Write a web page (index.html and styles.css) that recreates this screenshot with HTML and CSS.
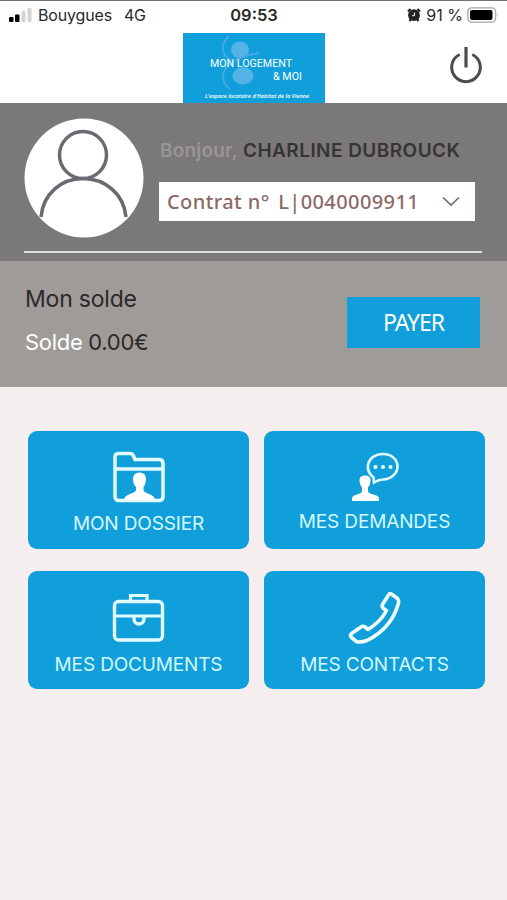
FILE: index.html
```html
<!DOCTYPE html>
<html lang="fr">
<head>
    <meta charset="UTF-8">
    <meta name="viewport" content="width=device-width, initial-scale=1.0">
    <title>Mon Logement &amp; Moi</title>
    <link rel="stylesheet" href="styles.css">
</head>
<body>
    <div class="status-bar">
        <div class="status-left">
            <svg class="signal" width="24" height="16" viewBox="0 0 24 16">
                <rect x="0" y="10" width="4.500" height="5" rx="1" fill="#000"/>
                <rect x="6" y="7.500" width="4.500" height="7.500" rx="1" fill="#000"/>
                <rect x="12.500" y="4" width="4" height="11" rx="1" fill="#d4d4d4"/>
                <rect x="18.500" y="1" width="4" height="14" rx="1" fill="#d4d4d4"/>
            </svg>
            <span class="carrier">Bouygues</span>
            <span class="network">4G</span>
        </div>
        <span class="time">09:53</span>
        <div class="status-right">
            <svg width="14" height="14" viewBox="0 0 14 14">
                <path d="M1 3.500L3.500 1M13 3.500L10.500 1M2.500 13l1.500-2M11.500 13l-1.500-2" stroke="#222" stroke-width="2.200"/>
                <circle cx="7" cy="7.200" r="5.900" fill="#222"/>
                <path d="M7.500 4.500v3.200H5" fill="none" stroke="#fff" stroke-width="1"/>
            </svg>
            <span class="percent">91 %</span>
            <svg class="battery" width="32" height="16" viewBox="0 0 32 16">
                <rect x="0.800" y="0.800" width="27.800" height="14.400" rx="4" fill="#fff" stroke="#a5a5a5" stroke-width="1.300"/>
                <rect x="3" y="3" width="22.500" height="10" rx="2" fill="#000"/>
                <path d="M30 6v4q1.600-2 0-4z" fill="#a5a5a5"/>
            </svg>
        </div>
    </div>

    <div class="header">
        <svg class="logo" width="142" height="70" viewBox="0 0 142 70">
            <rect width="142" height="70" fill="#109fdb"/>
            <ellipse cx="57" cy="17" rx="9" ry="8.500" fill="#55b2e6"/>
            <ellipse cx="60" cy="43" rx="10.500" ry="8.500" fill="#55b2e6"/>
            <path d="M46 3q-7 6-6 14 2 9 11 12M51 29q-10 4-11 14 0 9 7 13M52 28q10-6 24-8" fill="none" stroke="#45ace2" stroke-width="1.800"/>
            <text class="logo-text" x="27" y="34" textLength="82" lengthAdjust="spacingAndGlyphs">MON LOGEMENT</text>
            <text class="logo-text" x="90" y="46.500" textLength="29" lengthAdjust="spacingAndGlyphs">&amp; MOI</text>
            <text class="logo-small" x="22" y="65" textLength="104" lengthAdjust="spacingAndGlyphs">L'espace locataire d'Habitat de la Vienne</text>
        </svg>
        <svg class="power" width="34" height="40" viewBox="0 0 34 40">
            <path d="M10.700 8.500A14.300 14.300 0 1 0 23.300 8.500" fill="none" stroke="#4c4c4c" stroke-width="3"/>
            <path d="M17 1v20.500" stroke="#4c4c4c" stroke-width="3.200"/>
        </svg>
    </div>

    <div class="profile">
        <div class="profile-row">
            <svg class="avatar" width="120" height="120" viewBox="0 0 120 120">
                <circle cx="60" cy="60" r="59.500" fill="#fff"/>
                <circle cx="59" cy="37" r="23.500" fill="none" stroke="#6a6b72" stroke-width="3.500"/>
                <path d="M17 99C19 76 37 60.500 59 60.500S100 76 102 99" fill="none" stroke="#6a6b72" stroke-width="3.500"/>
            </svg>
            <div class="profile-info">
                <div class="hello"><span class="bonjour">Bonjour,</span><span class="name">CHARLINE DUBROUCK</span></div>
                <div class="contract">
                    <span class="contract-label">Contrat n<span class="degree">°</span> L|0040009911</span>
                    <svg width="18" height="11" viewBox="0 0 18 11">
                        <path d="M1 1.500l8 7.500 8-7.500" fill="none" stroke="#77696a" stroke-width="1.700"/>
                    </svg>
                </div>
            </div>
        </div>
    </div>

    <div class="balance">
        <div>
            <div class="balance-title">Mon solde</div>
            <div class="balance-value"><span>Solde</span> 0.00€</div>
        </div>
        <a href="#" class="pay">PAYER</a>
    </div>

    <div class="menu">
        <a href="#" class="card">
            <svg width="54" height="54" viewBox="0 0 54 54">
                <path d="M6 3.500H18Q20.500 3.500 21.500 6L23 9.500H47Q51 9.500 51 13.500V46.500Q51 50.500 47 50.500H7Q3 50.500 3 46.500V7Q3 3.500 6 3.500ZM3 19H51" fill="none" stroke="#e2fbff" stroke-width="3.600"/>
                <path d="M12 50Q12 46 18 44Q24 42 24 40V37Q21 34 21 29Q21 22.500 27.500 22.500Q34 22.500 34 29Q34 34 31.500 37V40Q31.500 42 37 44Q43 46 43 50Z" fill="#fff"/>
            </svg>
            <span>MON DOSSIER</span>
        </a>
        <a href="#" class="card card-demandes">
            <svg width="54" height="54" viewBox="0 0 54 54">
                <path d="M25.500 27.500C20 23 19.500 18 20 15C21.500 7.500 28 4 35 4C43.500 4 49.500 9.500 49.500 16.500S43 29 35 29.500C32 29.500 30 30 26 32.500Z" fill="none" stroke="#e2fbff" stroke-width="2.600"/>
                <circle cx="27.500" cy="17" r="2.100" fill="#e2fbff"/>
                <circle cx="35" cy="17" r="2.100" fill="#e2fbff"/>
                <circle cx="42.500" cy="17" r="2.100" fill="#e2fbff"/>
                <path d="M4 51V48.500Q4 46 9 44.500Q14 43 14 41V37.500Q11.500 35 11.500 30Q11.500 25.500 17 25.500Q22.500 25.500 22.500 30Q22.500 35 20 37.500V41Q20 43 25.500 44.500Q31 46 31 48.500V51Z" fill="#fff"/>
            </svg>
            <span>MES DEMANDES</span>
        </a>
        <a href="#" class="card card-low">
            <svg width="54" height="54" viewBox="0 0 54 54">
                <rect x="2.500" y="11.500" width="48" height="38.500" rx="4" fill="none" stroke="#e2fbff" stroke-width="3.400"/>
                <path d="M18.500 11V5.500H35V11M3 26H50.500" fill="none" stroke="#e2fbff" stroke-width="3.200"/>
                <path d="M22 27V29A5 5 0 0 0 32 29V27" fill="none" stroke="#e2fbff" stroke-width="3.400"/>
            </svg>
            <span>MES DOCUMENTS</span>
        </a>
        <a href="#" class="card card-low">
            <svg width="54" height="54" viewBox="0 0 54 54">
                <path d="M43.500 4L49.500 8.500Q51 10 50.500 13C46 30 35 42.500 19 50.500Q12 53 8.500 51.500L3.500 47.500Q1.500 45.500 3.500 43.500L13 37Q15 35.500 17 37L20 39.500C28 34.500 34.500 28.500 38.500 20.500L35.500 18.500Q33.500 17 34.500 14.500L40.500 5Q41.500 3 43.500 4Z" fill="none" stroke="#f0fdff" stroke-width="3.600" stroke-linejoin="round"/>
            </svg>
            <span>MES CONTACTS</span>
        </a>
    </div>
</body>
</html>
```
FILE: styles.css
```css
* {
    box-sizing: border-box;
}
body {
    font-family: Inter, "Liberation Sans", sans-serif;
    background: #f4efee;
    margin: 0;
    height: 900px;
    color: #2b292a;
}
svg {
    display: block;
    flex: none;
}
a {
    text-decoration: none;
}
.status-bar {
    display: grid;
    grid-template-columns: 1fr auto 1fr;
    align-items: center;
    height: 28px;
    padding: 0 8px 0 9px;
    border-top: 1px solid #747273;
    background: #fff;
    font-size: 16px;
    white-space: nowrap;
}
.status-left,
.status-right {
    display: flex;
    align-items: center;
}
.status-right {
    justify-content: flex-end;
}
.carrier {
    margin-left: 5px;
    letter-spacing: -0.15px;
}
.network {
    margin-left: 12px;
    letter-spacing: -0.3px;
}
.time {
    font-size: 16.5px;
    font-weight: 600;
}
.percent {
    margin: 0 4px 0 5px;
}
.header {
    display: flex;
    align-items: flex-start;
    justify-content: space-between;
    height: 75px;
    padding: 5px 24px 0 183px;
    background: #fff;
}
.logo-text {
    font: 400 10.5px Roboto, sans-serif;
    fill: #fff;
}
.logo-small {
    font: italic 600 5.5px "Open Sans", sans-serif;
    fill: #fff;
}
.power {
    margin-top: 13px;
}
.profile {
    height: 158px;
    padding: 15px 25px 0 24px;
    background: #7b7879;
}
.profile-row {
    display: flex;
    height: 135px;
    border-bottom: 2px solid #dedcdc;
}
.profile-info {
    margin-left: 15px;
    width: 316px;
}
.hello {
    display: flex;
    height: 64px;
    padding: 20px 0 0 1px;
    font-size: 19px;
    line-height: 26px;
    font-weight: 600;
    white-space: nowrap;
}
.bonjour {
    width: 83px;
    color: #989596;
    letter-spacing: 0.2px;
}
.name {
    color: #363435;
    letter-spacing: 0.45px;
}
.contract {
    display: flex;
    align-items: center;
    justify-content: space-between;
    height: 39px;
    padding: 0 15px 0 8px;
    background: #fff;
    color: #8b6a68;
    font: 500 20px "Noto Sans", sans-serif;
    letter-spacing: 0.4px;
    white-space: nowrap;
}
.degree {
    margin-right: 3px;
}
.balance {
    display: flex;
    justify-content: space-between;
    align-items: flex-start;
    height: 126px;
    padding: 24px 27px 0 25px;
    background: #9e9b99;
}
.balance-title {
    font-size: 23px;
    line-height: 28px;
    letter-spacing: -0.2px;
}
.balance-value {
    margin-top: 15px;
    font-size: 22px;
    line-height: 28px;
    letter-spacing: -0.3px;
}
.balance-value span {
    color: #fff;
}
.pay {
    width: 133px;
    height: 51px;
    margin-top: 12px;
    background: #109fdb;
    color: #fff;
    font: 400 23px/51px "Noto Sans", sans-serif;
    letter-spacing: -1px;
    text-align: center;
}
.menu {
    display: grid;
    grid-template-columns: 221px 221px;
    grid-auto-rows: 118px;
    gap: 22.5px 15px;
    padding: 43.5px 0 0 28px;
}
.card {
    display: flex;
    flex-direction: column;
    align-items: center;
    padding-top: 19px;
    border-radius: 9px;
    background: #109fdb;
    color: #d5f8ff;
    font-size: 19px;
    line-height: 24px;
    letter-spacing: -0.15px;
}
.card span {
    margin-top: 8px;
}
.card-demandes span {
    margin-top: 6px;
}
.card-low span {
    margin-top: 9px;
}
```
